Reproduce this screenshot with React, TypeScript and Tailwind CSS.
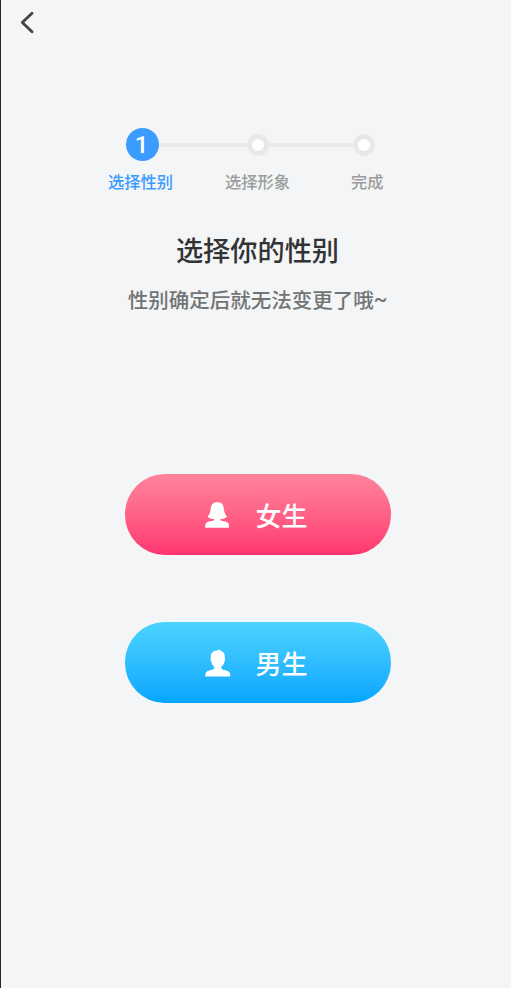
import { useState } from "react";
import type { ReactNode } from "react";

type Gender = "female" | "male";

interface GenderButtonProps {
  label: string;
  className: string;
  icon: ReactNode;
  selected: boolean;
  onClick: () => void;
}

const FemaleIcon = () => (
  <svg width="25" height="26" viewBox="0 0 25 26" fill="currentColor">
    <path d="M12.3 0.2C8 0.2 6 2.8 5.7 6.8C5.5 10 4.6 12.8 2.5 14.6C4 16.5 7 17.2 9.4 17.2V18C8.6 18.9 6.4 19 3.8 19.4C1.5 19.9 0.3 21.5 0.2 23.8V25.8H24V23.8C23.9 21.5 22.8 19.9 20.5 19.4C18 19 16 18.9 15.2 18V17.2C17.6 17.2 20.6 16.5 22.1 14.6C20 12.8 19.1 10 18.9 6.8C18.6 2.8 16.6 0.2 12.3 0.2Z" />
  </svg>
);

const MaleIcon = () => (
  <svg width="26" height="28" viewBox="0 0 26 28" fill="currentColor">
    <path d="M14.4 0.4L16 2C18.7 2.7 19.8 4.7 19.8 7.3V10C20.3 10.4 20.1 12.1 19.4 12.8C19 15 17.8 16.6 16.3 17.8V19.3C16.9 20.6 19 21 21 21.4C24 22 25.1 23.3 25.2 25.7V27.6H0.3V25.7C0.4 23.3 1.6 22 4.5 21.4C6.5 21 8.6 20.6 9.2 19.3V17.8C7.7 16.6 6.7 15 6.3 12.8C5.6 12.1 5.3 10.4 5.8 10V7C5.9 3.9 8.3 1.9 12.2 1.5Z" />
  </svg>
);

function GenderButton({ label, className, icon, selected, onClick }: GenderButtonProps) {
  return (
    <button
      type="button"
      aria-pressed={selected}
      onClick={onClick}
      className={`flex h-[81px] w-[266px] items-center rounded-[40px] bg-linear-to-b pl-[80px] text-white ${className}`}
    >
      <span className="flex w-[51px]">{icon}</span>
      <span className="text-[26px] leading-none font-medium">{label}</span>
    </button>
  );
}

const StepDot = () => (
  <span className="size-[22px] rounded-full border-[5px] border-[#e7e8e8] bg-white" />
);

export default function App() {
  const [gender, setGender] = useState<Gender | null>(null);

  return (
    <div className="flex h-[988px] w-[511px] flex-col overflow-hidden border-l border-[#25272a] bg-[#f3f5f7] font-['Noto_Sans_CJK_SC',sans-serif]">
      {/* 顶部返回 */}
      <header className="flex h-[128px] pt-[11px] pl-[19px]">
        <button type="button" aria-label="返回" className="h-6 w-4 text-[#444]">
          <svg width="16" height="24" viewBox="0 0 16 24" fill="none">
            <path
              d="M12 2.3L2.3 11.5L12 20.7"
              stroke="currentColor"
              strokeWidth="2.9"
              strokeLinecap="round"
              strokeLinejoin="round"
            />
          </svg>
        </button>
      </header>

      {/* 步骤条 */}
      <div className="flex h-[33px] items-center pl-[125px]">
        <span className="flex size-[33px] items-center justify-center rounded-full bg-[#3b9bff] pr-[2px] font-['Roboto',sans-serif] text-[24px] leading-none font-medium text-white">
          1
        </span>
        <span className="h-1 w-[87.5px] bg-[#e9eaea]" />
        <StepDot />
        <span className="h-1 w-[84.5px] bg-[#e9eaea]" />
        <StepDot />
      </div>
      <div className="mt-[8px] flex pl-[107px] text-[16.3px] leading-6 font-medium whitespace-nowrap text-[#9b9d9d]">
        <span className="w-[117px] text-[#3b9bff]">选择性别</span>
        <span className="w-[126px]">选择形象</span>
        <span>完成</span>
      </div>

      {/* 标题 */}
      <h1 className="mt-[36px] pl-[3px] text-center text-[27.2px] leading-10 font-medium text-[#333]">
        选择你的性别
      </h1>
      <p className="mt-[15px] flex h-[30px] justify-center pl-[3px] text-[20.5px] leading-[30px] font-medium text-[#727474]">
        <span>性别确定后就无法变更了哦</span>
        <span className="font-['Roboto',sans-serif]">~</span>
      </p>

      {/* 性别选择 */}
      <div className="mt-[160px] flex flex-col gap-[67px] pl-[123.5px]">
        <GenderButton
          label="女生"
          className="from-[#ff839c] to-[#ff3370]"
          icon={<FemaleIcon />}
          selected={gender === "female"}
          onClick={() => setGender("female")}
        />
        <GenderButton
          label="男生"
          className="from-[#4bd4ff] to-[#00a5ff]"
          icon={<MaleIcon />}
          selected={gender === "male"}
          onClick={() => setGender("male")}
        />
      </div>
    </div>
  );
}
